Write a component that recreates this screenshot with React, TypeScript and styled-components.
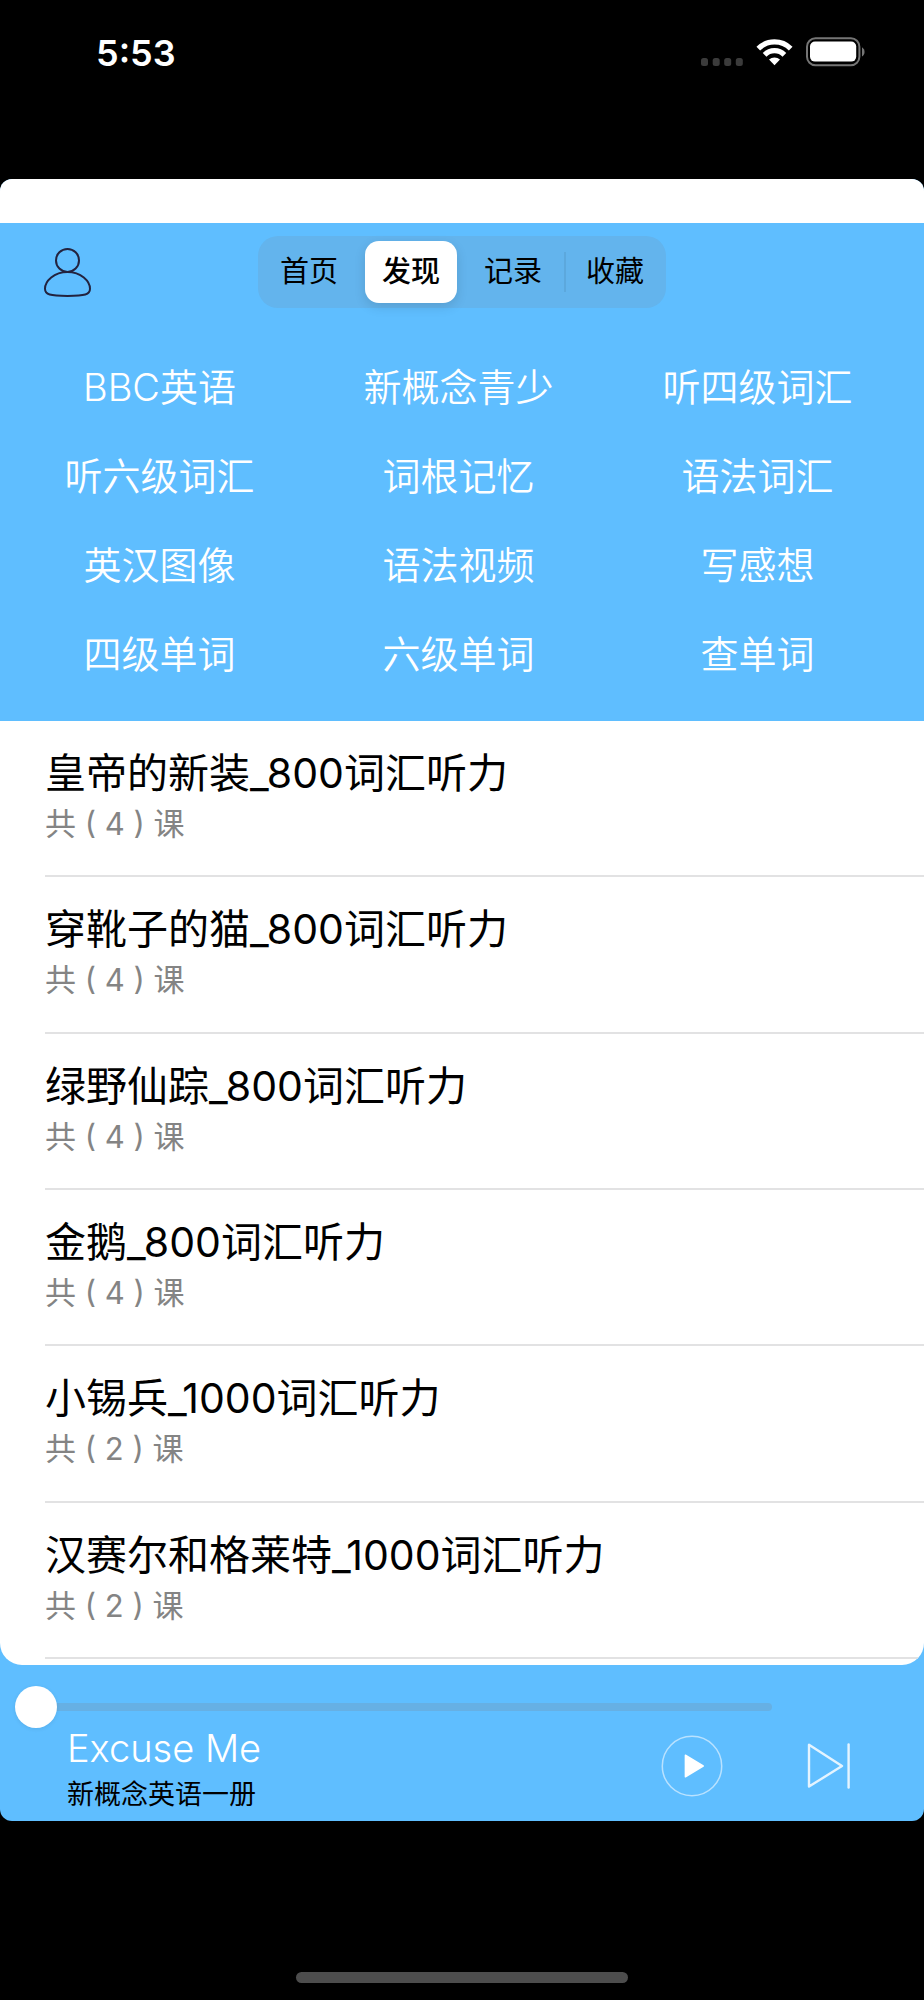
import React, { useState } from "react";
import styled, { createGlobalStyle } from "styled-components";

const blue = "#5fbeff";

const GlobalStyle = createGlobalStyle`
  *, *::before, *::after { box-sizing: border-box; }
  body {
    margin: 0;
    background: #000;
    font-family: Inter, "Noto Sans CJK SC", sans-serif;
  }
  button {
    font: inherit;
    color: inherit;
    background: none;
    border: 0;
    padding: 0;
    cursor: pointer;
  }
`;

const Page = styled.div`
  display: flex;
  flex-direction: column;
  min-height: 100vh;
`;

const StatusBar = styled.header`
  display: flex;
  justify-content: space-between;
  align-items: flex-start;
  height: 179px;
  padding: 32px 58px 0 96px;
  color: #fff;
`;

const Clock = styled.time`
  font-size: 36px;
  font-weight: 600;
  line-height: 42px;
`;

const StatusIcons = styled.div`
  display: flex;
  align-items: center;
  gap: 13px;
  height: 40px;
`;

const Card = styled.main`
  display: flex;
  flex: 1;
  flex-direction: column;
  overflow: hidden;
  border-radius: 12px;
  background: ${blue};
`;

const SheetTop = styled.div`
  height: 44px;
  background: #fff;
`;

const NavBar = styled.nav`
  display: grid;
  grid-template-columns: 1fr 408px 1fr;
  align-items: start;
  height: 120px;
  padding-top: 13px;
`;

const ProfileButton = styled.button`
  display: flex;
  width: 52px;
  margin: 11px 0 0 42px;
`;

const Segments = styled.div`
  display: flex;
  height: 72px;
  border-radius: 20px;
  background: #63b4ed;
`;

const Segment = styled.button<{ $active: boolean; $divided: boolean }>`
  position: relative;
  width: ${(p) => (p.$active ? "calc(25% - 10px)" : "25%")};
  margin: ${(p) => (p.$active ? "5px" : "5px 0")};
  border-radius: 14px;
  background: ${(p) => (p.$active ? "#fff" : "transparent")};
  box-shadow: ${(p) => (p.$active ? "0 4px 12px rgba(0, 0, 0, 0.12)" : "none")};
  color: #000;
  font-size: 29px;
  font-weight: ${(p) => (p.$active ? 500 : 400)};
  line-height: 62px;

  &::before {
    content: "";
    display: ${(p) => (p.$divided ? "block" : "none")};
    position: absolute;
    top: 11px;
    left: 0;
    width: 2px;
    height: 40px;
    background: #5ca8dd;
  }
`;

const Categories = styled.section`
  display: grid;
  grid-template-columns: repeat(3, 1fr);
  grid-auto-rows: 1fr;
  height: 378px;
  padding: 0 17px 21px 10px;
`;

const Category = styled.button`
  padding-bottom: 2px;
  color: #fff;
  font-size: 38px;
  font-weight: 350;
  line-height: 56px;
`;

const Lessons = styled.ul`
  display: flex;
  flex: 1;
  flex-direction: column;
  margin: 0;
  padding: 0 0 6px;
  overflow: hidden;
  list-style: none;
  border-radius: 0 0 22px 22px;
  background: #fff;
`;

const LessonRow = styled.li`
  flex: 1;
  margin-left: 45px;
  border-bottom: 2px solid #e2e2e3;
`;

const LessonButton = styled.button`
  display: block;
  width: 100%;
  padding: 26px 0 22px;
  text-align: left;
`;

const LessonTitle = styled.span`
  display: block;
  color: #000;
  font-size: 41px;
  line-height: 52px;
`;

const LessonCount = styled.span`
  display: block;
  color: #848484;
  font-size: 31px;
  line-height: 50px;
`;

const Player = styled.footer`
  height: 156px;
  padding: 21px 0 0 15px;
`;

const Progress = styled.input`
  display: block;
  appearance: none;
  width: calc(100% - 152px);
  height: 42px;
  margin: 0;
  background: transparent;

  &::-webkit-slider-runnable-track {
    height: 8px;
    border-radius: 4px;
    background: #66b0e4;
  }
  &::-webkit-slider-thumb {
    appearance: none;
    width: 42px;
    height: 42px;
    margin-top: -17px;
    border-radius: 50%;
    background: #fff;
    box-shadow: 0 1px 4px rgba(0, 0, 0, 0.08);
  }
`;

const PlayerRow = styled.div`
  display: flex;
  align-items: center;
  padding: 0 73px 0 52px;
`;

const Track = styled.div`
  flex: 1;
`;

const TrackTitle = styled.div`
  color: #fff;
  font-size: 38px;
  font-weight: 350;
  line-height: 40px;
`;

const TrackAlbum = styled.div`
  color: #000;
  font-size: 27px;
  line-height: 54px;
`;

const Controls = styled.div`
  display: flex;
  align-items: center;
  gap: 82px;
  margin-top: -18px;
`;

const IconButton = styled.button`
  display: flex;
`;

const HomeArea = styled.div`
  display: flex;
  justify-content: center;
  align-items: flex-end;
  height: 179px;
  padding-bottom: 17px;
`;

const HomeIndicator = styled.div`
  width: 36%;
  height: 11px;
  border-radius: 6px;
  background: #4d4d4d;
`;

const tabs = ["首页", "发现", "记录", "收藏"];

const categories = [
  "BBC英语", "新概念青少", "听四级词汇",
  "听六级词汇", "词根记忆", "语法词汇",
  "英汉图像", "语法视频", "写感想",
  "四级单词", "六级单词", "查单词",
];

const lessons = [
  { title: "皇帝的新装_800词汇听力", count: 4 },
  { title: "穿靴子的猫_800词汇听力", count: 4 },
  { title: "绿野仙踪_800词汇听力", count: 4 },
  { title: "金鹅_800词汇听力", count: 4 },
  { title: "小锡兵_1000词汇听力", count: 2 },
  { title: "汉赛尔和格莱特_1000词汇听力", count: 2 },
];

const SignalIcon = () => (
  <svg width="42" height="28" viewBox="0 0 42 28" fill="#3b3b3b" aria-hidden="true">
    <rect x="0" y="20" width="7" height="8" rx="2.5" />
    <rect x="11.7" y="20" width="7" height="8" rx="2.5" />
    <rect x="23.2" y="20" width="7" height="8" rx="2.5" />
    <rect x="34.8" y="20" width="7" height="8" rx="2.5" />
  </svg>
);

const WifiIcon = () => (
  <svg width="37" height="28" viewBox="0 0 37 28" aria-hidden="true">
    <g fill="none" stroke="#fff" strokeWidth="5.2">
      <path d="M2.3 10.6a23 23 0 0 1 32.4 0" />
      <path d="M8.6 16.8a14 14 0 0 1 19.8 0" />
    </g>
    <path d="M13 21.6a8 8 0 0 1 11 0L18.5 27.2Z" fill="#fff" />
  </svg>
);

const BatteryIcon = () => (
  <svg width="60" height="30" viewBox="0 0 60 30" aria-hidden="true">
    <rect x="1" y="1.2" width="52.4" height="27" rx="8.5" fill="none" stroke="#757575" strokeWidth="2" />
    <rect x="4" y="4.6" width="46.2" height="20" rx="5" fill="#fff" />
    <path d="M56 10.2a5.6 5.6 0 0 1 0 9.4Z" fill="#757575" />
  </svg>
);

const UserIcon = () => (
  <svg width="52" height="52" viewBox="0 0 52 52" fill="none" stroke="#23233f" strokeWidth="2" aria-hidden="true">
    <circle cx="25.5" cy="13.4" r="11.5" />
    <path d="M25.5 25C12 25 3 34.2 3 41.8C3 47.6 8 48.9 25.5 48.9C43 48.9 48 47.6 48 41.8C48 34.2 39 25 25.5 25Z" />
  </svg>
);

const PlayIcon = () => (
  <svg width="62" height="62" viewBox="0 0 62 62" aria-hidden="true">
    <circle cx="31" cy="31" r="29.7" fill="none" stroke="#b9e2ff" strokeWidth="1.5" />
    <path d="M24.4 20.2L42.2 31L24.4 41.8Z" fill="#fff" stroke="#fff" strokeWidth="1.5" strokeLinejoin="round" />
  </svg>
);

const NextIcon = () => (
  <svg width="46" height="48" viewBox="0 0 46 48" fill="none" stroke="#e4f4ff" strokeWidth="2.4" strokeLinejoin="round" strokeLinecap="round" aria-hidden="true">
    <path d="M4 2.8V44.6L37 24Z" />
    <path d="M43.6 2.4V45.6" />
  </svg>
);

export default function App() {
  const [active, setActive] = useState(1);
  const [progress, setProgress] = useState(0);

  return (
    <>
      <GlobalStyle />
      <Page>
        <StatusBar>
          <Clock>5:53</Clock>
          <StatusIcons>
            <SignalIcon />
            <WifiIcon />
            <BatteryIcon />
          </StatusIcons>
        </StatusBar>
        <Card>
          <SheetTop />
          <NavBar>
            <ProfileButton type="button" aria-label="个人中心">
              <UserIcon />
            </ProfileButton>
            <Segments>
              {tabs.map((tab, i) => (
                <Segment
                  key={tab}
                  type="button"
                  aria-pressed={i === active}
                  $active={i === active}
                  $divided={i > 0 && i !== active && i - 1 !== active}
                  onClick={() => setActive(i)}
                >
                  {tab}
                </Segment>
              ))}
            </Segments>
          </NavBar>
          <Categories>
            {categories.map((name) => (
              <Category key={name} type="button">{name}</Category>
            ))}
          </Categories>
          <Lessons>
            {lessons.map((lesson) => (
              <LessonRow key={lesson.title}>
                <LessonButton type="button">
                  <LessonTitle>{lesson.title}</LessonTitle>
                  <LessonCount>共 ( {lesson.count} ) 课</LessonCount>
                </LessonButton>
              </LessonRow>
            ))}
          </Lessons>
          <Player>
            <Progress
              type="range"
              min={0}
              max={100}
              value={progress}
              aria-label="播放进度"
              onChange={(e) => setProgress(Number(e.target.value))}
            />
            <PlayerRow>
              <Track>
                <TrackTitle>Excuse Me</TrackTitle>
                <TrackAlbum>新概念英语一册</TrackAlbum>
              </Track>
              <Controls>
                <IconButton type="button" aria-label="播放"><PlayIcon /></IconButton>
                <IconButton type="button" aria-label="下一首"><NextIcon /></IconButton>
              </Controls>
            </PlayerRow>
          </Player>
        </Card>
        <HomeArea>
          <HomeIndicator />
        </HomeArea>
      </Page>
    </>
  );
}
